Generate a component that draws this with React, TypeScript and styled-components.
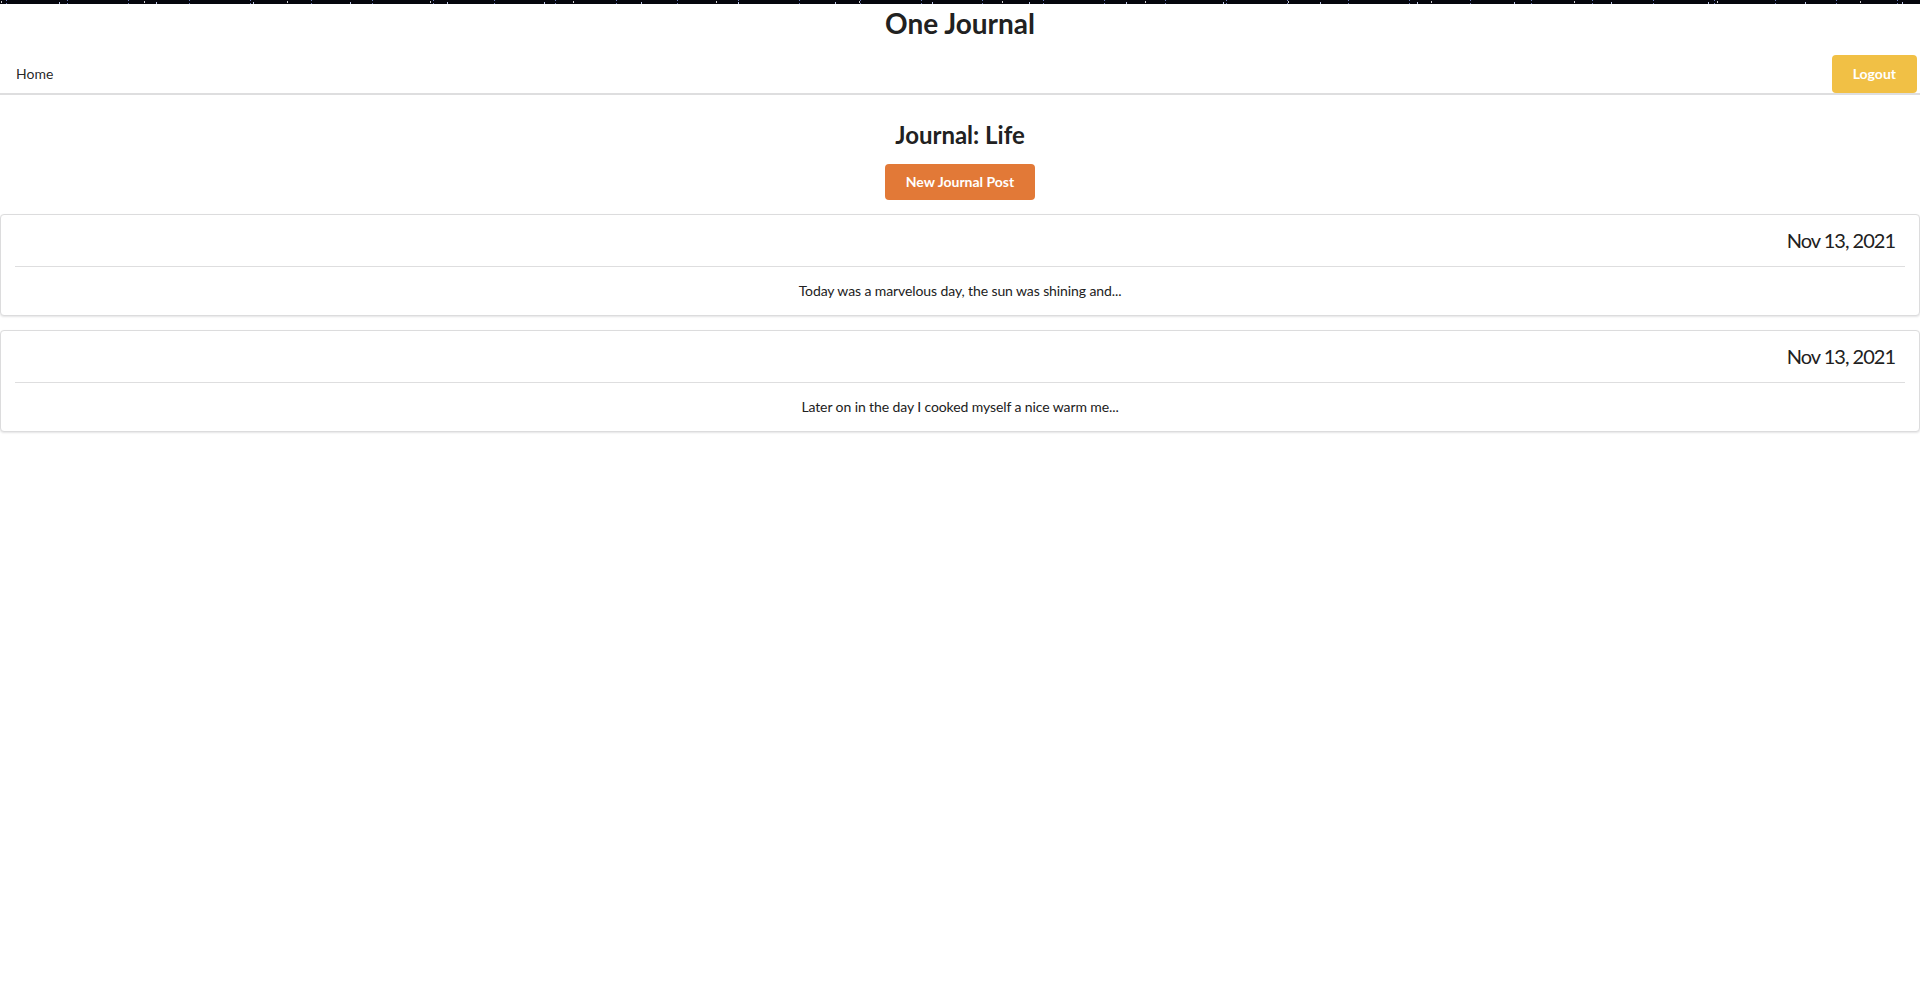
import React from "react";
import styled, { createGlobalStyle } from "styled-components";

const GlobalStyle = createGlobalStyle`
  html, body {
    margin: 0;
    padding: 0;
    background: #ffffff;
  }
  body {
    font-family: Lato, "Open Sans", "Liberation Sans", sans-serif;
    font-size: 14px;
    color: rgba(0, 0, 0, 0.87);
  }
  * { box-sizing: border-box; }
`;

const Page = styled.div`
  display: flex;
  flex-direction: column;
  min-height: 100vh;
  background: #ffffff;
`;

const StarStrip = styled.div`
  height: 4px;
  background-color: #05060d;
  background-image:
    radial-gradient(circle, rgba(210, 220, 255, 0.9) 0.7px, transparent 1.1px),
    radial-gradient(circle, rgba(150, 170, 255, 0.7) 0.6px, transparent 1px),
    radial-gradient(circle, rgba(255, 255, 255, 0.8) 0.5px, transparent 1px);
  background-size: 97px 4px, 61px 4px, 143px 4px;
  background-position: 11px 1px, 37px 2px, 73px 0px;
`;

const SiteTitle = styled.h1`
  margin: 0 0 14px;
  padding-top: 1px;
  font-size: 28px;
  line-height: 36px;
  font-weight: 700;
  text-align: center;
  color: #212121;
`;

const Menu = styled.nav`
  display: flex;
  align-items: stretch;
  justify-content: space-between;
  border-bottom: 2px solid rgba(34, 36, 38, 0.15);
`;

const MenuItem = styled.a`
  display: flex;
  align-items: center;
  padding: 12px 16px;
  font-size: 14px;
  line-height: 14px;
  color: rgba(0, 0, 0, 0.87);
  text-decoration: none;
  cursor: pointer;
`;

const RightItem = styled.div`
  display: flex;
  align-items: stretch;
  padding-right: 3px;
`;

const Button = styled.button<{ $color: string }>`
  border: none;
  border-radius: 4px;
  background: ${(p) => p.$color};
  color: #ffffff;
  font-family: Lato, "Open Sans", "Liberation Sans", sans-serif;
  font-weight: 700;
  font-size: 14px;
  line-height: 14px;
  padding: 11px 21px;
  cursor: pointer;
`;

const LogoutButton = styled(Button)`
  padding: 12px 21px;
`;

const Main = styled.main`
  display: flex;
  flex-direction: column;
  align-items: center;
  padding-top: 24px;
`;

const JournalTitle = styled.h2`
  margin: 0 0 14px;
  font-size: 24px;
  line-height: 31px;
  font-weight: 700;
  color: #212121;
`;

const PostList = styled.div`
  align-self: stretch;
  display: flex;
  flex-direction: column;
  gap: 14px;
  margin-top: 14px;
`;

const PostCard = styled.article`
  background: #ffffff;
  border: 1px solid #dcdcdd;
  border-radius: 4px;
  box-shadow: 0 1px 2px rgba(34, 36, 38, 0.12);
  padding: 13px 14px 14px;
`;

const PostDate = styled.div`
  font-size: 20px;
  line-height: 24px;
  letter-spacing: -1px;
  text-align: right;
  padding-right: 10px;
  color: #212121;
`;

const Divider = styled.hr`
  margin: 14px 0;
  border: none;
  border-top: 1px solid rgba(34, 36, 38, 0.15);
`;

const PostExcerpt = styled.p`
  margin: 0;
  font-size: 14px;
  line-height: 20px;
  letter-spacing: -0.1px;
  text-align: center;
  color: #212121;
`;

const posts = [
  { date: "Nov 13, 2021", excerpt: "Today was a marvelous day, the sun was shining and..." },
  { date: "Nov 13, 2021", excerpt: "Later on in the day I cooked myself a nice warm me..." },
];

export default function App() {
  return (
    <>
      <GlobalStyle />
      <Page>
        <StarStrip />
        <SiteTitle>One Journal</SiteTitle>
        <Menu>
          <MenuItem>Home</MenuItem>
          <RightItem>
            <LogoutButton $color="#f1c045">Logout</LogoutButton>
          </RightItem>
        </Menu>
        <Main>
          <JournalTitle>Journal: Life</JournalTitle>
          <Button $color="#e27937">New Journal Post</Button>
          <PostList>
            {posts.map((post, i) => (
              <PostCard key={i}>
                <PostDate>{post.date}</PostDate>
                <Divider />
                <PostExcerpt>{post.excerpt}</PostExcerpt>
              </PostCard>
            ))}
          </PostList>
        </Main>
      </Page>
    </>
  );
}
